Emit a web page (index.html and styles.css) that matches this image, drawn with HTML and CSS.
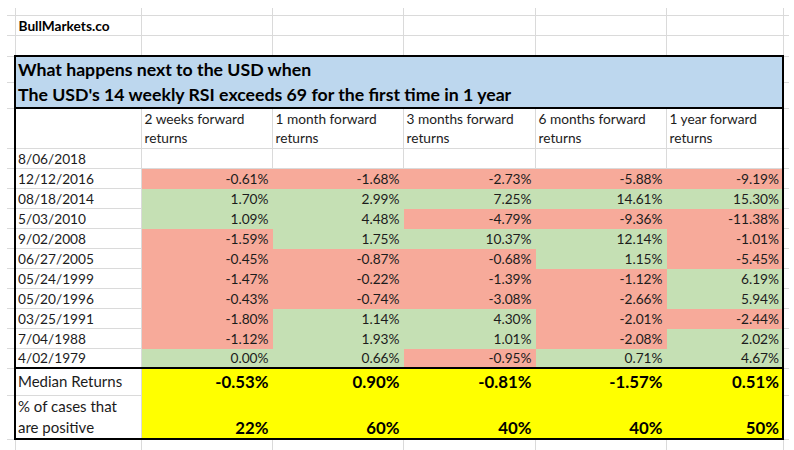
FILE: index.html
```html
<!DOCTYPE html>
<html>
<head>
<meta charset="utf-8">
<title>USD RSI</title>
<link rel="stylesheet" href="styles.css">
</head>
<body>
<table class="sheet">
  <colgroup>
    <col class="c-stub-l"><col class="c-date"><col class="c-n1"><col class="c-n2"><col class="c-n3"><col class="c-n4"><col class="c-n5"><col class="c-stub-r">
  </colgroup>
  <tr class="r-top"><td class="first"></td><td></td><td></td><td></td><td></td><td></td><td></td><td class="last"></td></tr>
  <tr class="r-20"><td class="first"></td><td class="brand">BullMarkets.co</td><td></td><td></td><td></td><td></td><td></td><td class="last"></td></tr>
  <tr class="r-21"><td class="first"></td><td></td><td></td><td></td><td></td><td></td><td></td><td class="last"></td></tr>
  <tr class="r-title"><td class="first"></td><td class="title" colspan="6" rowspan="2">What happens next to the USD when<br>The USD's 14 weekly RSI exceeds 69 for the first time in 1 year</td><td class="last"></td></tr>
  <tr class="r-title"><td class="first"></td><td class="last"></td></tr>
  <tr class="r-head">
    <td class="first"></td><td class="lbl bl"></td>
    <td class="hd">2 weeks forward<br>returns</td>
    <td class="hd">1 month forward<br>returns</td>
    <td class="hd">3 months forward<br>returns</td>
    <td class="hd">6 months forward<br>returns</td>
    <td class="hd br">1 year forward<br>returns</td>
    <td class="last"></td>
  </tr>
  <tr class="r-20"><td class="first"></td><td class="lbl bl">8/06/2018</td><td></td><td></td><td></td><td></td><td class="br"></td><td class="last"></td></tr>
  <tr class="r-20"><td class="first"></td><td class="lbl bl">12/12/2016</td><td class="v neg">-0.61%</td><td class="v neg">-1.68%</td><td class="v neg">-2.73%</td><td class="v neg">-5.88%</td><td class="v neg br">-9.19%</td><td class="last"></td></tr>
  <tr class="r-20"><td class="first"></td><td class="lbl bl">08/18/2014</td><td class="v pos">1.70%</td><td class="v pos">2.99%</td><td class="v pos">7.25%</td><td class="v pos">14.61%</td><td class="v pos br">15.30%</td><td class="last"></td></tr>
  <tr class="r-20"><td class="first"></td><td class="lbl bl">5/03/2010</td><td class="v pos">1.09%</td><td class="v pos">4.48%</td><td class="v neg">-4.79%</td><td class="v neg">-9.36%</td><td class="v neg br">-11.38%</td><td class="last"></td></tr>
  <tr class="r-20"><td class="first"></td><td class="lbl bl">9/02/2008</td><td class="v neg">-1.59%</td><td class="v pos">1.75%</td><td class="v pos">10.37%</td><td class="v pos">12.14%</td><td class="v neg br">-1.01%</td><td class="last"></td></tr>
  <tr class="r-20"><td class="first"></td><td class="lbl bl">06/27/2005</td><td class="v neg">-0.45%</td><td class="v neg">-0.87%</td><td class="v neg">-0.68%</td><td class="v pos">1.15%</td><td class="v neg br">-5.45%</td><td class="last"></td></tr>
  <tr class="r-20"><td class="first"></td><td class="lbl bl">05/24/1999</td><td class="v neg">-1.47%</td><td class="v neg">-0.22%</td><td class="v neg">-1.39%</td><td class="v neg">-1.12%</td><td class="v pos br">6.19%</td><td class="last"></td></tr>
  <tr class="r-20"><td class="first"></td><td class="lbl bl">05/20/1996</td><td class="v neg">-0.43%</td><td class="v neg">-0.74%</td><td class="v neg">-3.08%</td><td class="v neg">-2.66%</td><td class="v pos br">5.94%</td><td class="last"></td></tr>
  <tr class="r-20"><td class="first"></td><td class="lbl bl">03/25/1991</td><td class="v neg">-1.80%</td><td class="v pos">1.14%</td><td class="v pos">4.30%</td><td class="v neg">-2.01%</td><td class="v neg br">-2.44%</td><td class="last"></td></tr>
  <tr class="r-20"><td class="first"></td><td class="lbl bl">7/04/1988</td><td class="v neg">-1.12%</td><td class="v pos">1.93%</td><td class="v pos">1.01%</td><td class="v neg">-2.08%</td><td class="v pos br">2.02%</td><td class="last"></td></tr>
  <tr class="r-20"><td class="first"></td><td class="lbl bl">4/02/1979</td><td class="v pos">0.00%</td><td class="v pos">0.66%</td><td class="v neg">-0.95%</td><td class="v pos">0.71%</td><td class="v pos br">4.67%</td><td class="last"></td></tr>
  <tr class="r-med"><td class="first"></td><td class="sumlbl bl bt">Median Returns</td><td class="sv bt">-0.53%</td><td class="sv bt">0.90%</td><td class="sv bt">-0.81%</td><td class="sv bt">-1.57%</td><td class="sv bt br">0.51%</td><td class="last"></td></tr>
  <tr class="r-pos"><td class="first"></td><td class="sumlbl two bl bb">% of cases that<br>are positive</td><td class="sv low bb">22%</td><td class="sv low bb">60%</td><td class="sv low bb">40%</td><td class="sv low bb">40%</td><td class="sv low bb br">50%</td><td class="last"></td></tr>
  <tr class="r-end"><td class="first"></td><td></td><td></td><td></td><td></td><td></td><td></td><td class="last"></td></tr>
</table>
</body>
</html>
```

FILE: styles.css
```css
html, body {
  margin: 0;
  padding: 0;
  background: #ffffff;
}

body {
  font-family: Lato, "Liberation Sans", sans-serif;
  color: #1c1c1c;
  overflow: hidden;
}

.sheet {
  border-collapse: collapse;
  table-layout: fixed;
  width: 782px;
  margin: 8px 0 0 7px;
  font-size: 13.7px;
}

.c-stub-l { width: 8px; }
.c-date { width: 126px; }
.c-n1 { width: 131px; }
.c-n2 { width: 131px; }
.c-n3 { width: 132px; }
.c-n4 { width: 131px; }
.c-n5 { width: 117px; }
.c-stub-r { width: 6px; }

.sheet td {
  border: 1px solid #dadada;
  padding: 0 3px;
  line-height: 17px;
  white-space: nowrap;
  overflow: hidden;
  vertical-align: middle;
}

.sheet .first { border-left: none; padding: 0; }
.sheet .last { border-right: none; padding: 0; }
.r-top td { border-top: none; }
.r-end td { border-bottom: none; }

.r-top { height: 7px; }
.r-20 { height: 20px; }
.r-21 { height: 21px; }
.r-title { height: 26px; }
.r-head { height: 40px; }
.r-med { height: 27px; }
.r-pos { height: 44px; }
.r-end { height: 12px; }

.r-top td, .r-end td { line-height: 4px; }

.brand {
  font-weight: 700;
  color: #000;
  padding-left: 2px;
}

.sheet .brand { padding-left: 3px; }

.sheet .title {
  background: #bdd7ee;
  border: 2px solid #000;
  font-weight: 700;
  font-size: 17.7px;
  line-height: 25px;
  color: #000;
  padding-left: 2px;
}

.sheet .hd {
  vertical-align: top;
  line-height: 19px;
  padding-left: 3px;
}

.sheet .lbl { padding-left: 2px; }

.sheet .bl { border-left: 2px solid #000; }
.sheet .br { border-right: 2px solid #000; }
.sheet .bt { border-top: 2px solid #000; }
.sheet .bb { border-bottom: 2px solid #000; }

.sheet .v {
  text-align: right;
  padding-right: 3px;
}

.sheet .neg {
  background: #f7aa9a;
  border-top-color: #f7aa9a;
  border-bottom-color: #f7aa9a;
  border-left-color: #f7aa9a;
}
.sheet .neg:not(.br) { border-right-color: #f7aa9a; }

.sheet .pos {
  background: #c5e0b4;
  border-top-color: #c5e0b4;
  border-bottom-color: #c5e0b4;
  border-left-color: #c5e0b4;
}
.sheet .pos:not(.br) { border-right-color: #c5e0b4; }

.sheet .sumlbl {
  font-size: 15px;
  padding-left: 2px;
  line-height: 21px;
}

.sheet .sv {
  background: #ffff00;
  border-left-color: #ffff00;
  text-align: right;
  padding-right: 3px;
  font-weight: 700;
  font-size: 16.8px;
  color: #000;
  line-height: 21px;
}
.sheet .sv:not(.br) { border-right-color: #ffff00; }
.sheet .r-med .sv { border-bottom-color: #ffff00; }
.sheet .low { vertical-align: bottom; }
```
